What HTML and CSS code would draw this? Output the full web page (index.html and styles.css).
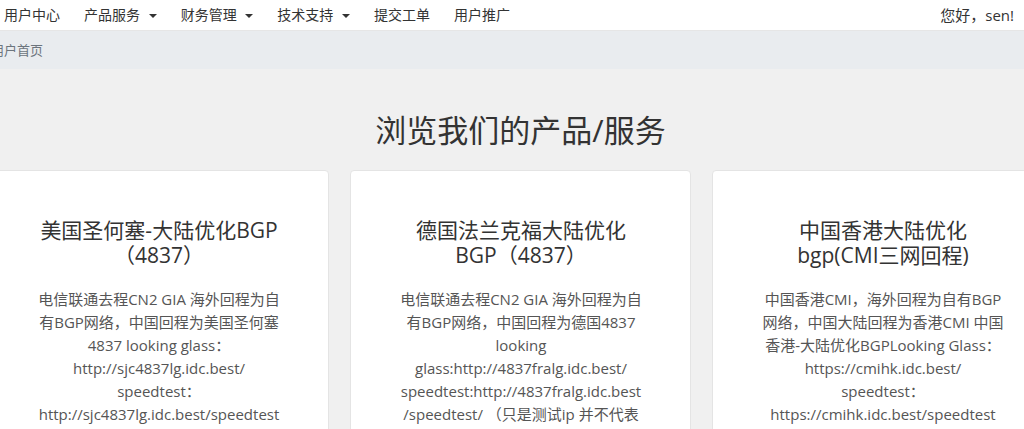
FILE: index.html
```html
<!DOCTYPE html>
<html lang="zh-CN">
<head>
    <meta charset="UTF-8">
    <meta name="viewport" content="width=device-width, initial-scale=1.0">
    <title>用户中心</title>
    <link rel="stylesheet" href="styles.css">
</head>
<body>

<div class="navbar">
    <ul class="nav-links">
        <li><a href="#">用户中心</a></li>
        <li><a href="#">产品服务 <span class="caret"></span></a></li>
        <li><a href="#">财务管理 <span class="caret"></span></a></li>
        <li><a href="#">技术支持 <span class="caret"></span></a></li>
        <li><a href="#">提交工单</a></li>
        <li><a href="#">用户推广</a></li>
    </ul>
    <div class="greeting">您好，sen!</div>
</div>

<div class="breadcrumb">
    <span>用户首页</span>
</div>

<div class="main">
    <div class="container">
        <h1>浏览我们的产品/服务</h1>

        <div class="products">
            <div class="card">
                <h3>美国圣何塞-大陆优化BGP（4837）</h3>
                <p>电信联通去程CN2 GIA 海外回程为自有BGP网络，中国回程为美国圣何塞4837 looking glass：http://sjc4837lg.idc.best/<wbr>speedtest：http://sjc4837lg.idc.best/speedtest</p>
            </div>
            <div class="card">
                <h3>德国法兰克福大陆优化BGP（4837）</h3>
                <p>电信联通去程CN2 GIA 海外回程为自有BGP网络，中国回程为德国4837 looking glass:http://4837fralg.idc.best/<wbr>speedtest:http://4837fralg.idc.best<wbr>/speedtest/ （只是测试ip 并不代表实际线路）</p>
            </div>
            <div class="card">
                <h3>中国香港大陆优化bgp(CMI三网回程)</h3>
                <p>中国香港CMI，海外回程为自有BGP网络，中国大陆回程为香港CMI 中国香港-大陆优化BGPLooking Glass：https://cmihk.idc.best/<br>speedtest：https://cmihk.idc.best/speedtest</p>
            </div>
        </div>
    </div>
</div>

</body>
</html>
```

FILE: styles.css
```css
html, body {
    overflow: hidden;
}

body {
    font-family: "Open Sans", "Noto Sans CJK SC", sans-serif;
    margin: 0;
    padding: 0;
    background-color: #f0f0f0;
    color: #333;
}

.navbar {
    display: flex;
    justify-content: space-between;
    align-items: center;
    height: 30px;
    background-color: #fff;
    border-bottom: 1px solid #e6e6e6;
    font-size: 14px;
}

.nav-links {
    display: flex;
    list-style: none;
    margin: 0 0 0 -8px;
    padding: 0;
}

.nav-links a {
    display: block;
    padding: 0 12px;
    color: #333;
    text-decoration: none;
    line-height: 28px;
}

.caret {
    display: inline-block;
    width: 0;
    height: 0;
    margin-left: 5px;
    vertical-align: middle;
    border-top: 4px solid #333;
    border-left: 4px solid transparent;
    border-right: 4px solid transparent;
}

.greeting {
    padding-right: 10px;
    font-size: 15px;
    color: #333;
    line-height: 28px;
}

.breadcrumb {
    height: 38px;
    line-height: 38px;
    background-color: #e9ecef;
    font-size: 13px;
    color: #6c757d;
}

.breadcrumb span {
    margin-left: -9px;
}

.main {
    padding-top: 40px;
}

.container {
    width: 1065px;
    margin-left: -12px;
}

.container h1 {
    margin: 0 0 19px;
    text-align: center;
    font-size: 31px;
    font-weight: 400;
    line-height: 42px;
}

.products {
    display: grid;
    grid-template-columns: repeat(3, 341px);
    gap: 21px;
}

.card {
    background-color: #fff;
    border: 1px solid #e4e4e4;
    border-radius: 4px;
    padding: 47px 48px 30px 49px;
    text-align: center;
    min-height: 300px;
}

.card h3 {
    margin: 0 0 20px;
    font-size: 21px;
    font-weight: 400;
    line-height: 25px;
    color: #333;
}

.card p {
    margin: 0;
    font-size: 15px;
    line-height: 23px;
    color: #555;
}
```
